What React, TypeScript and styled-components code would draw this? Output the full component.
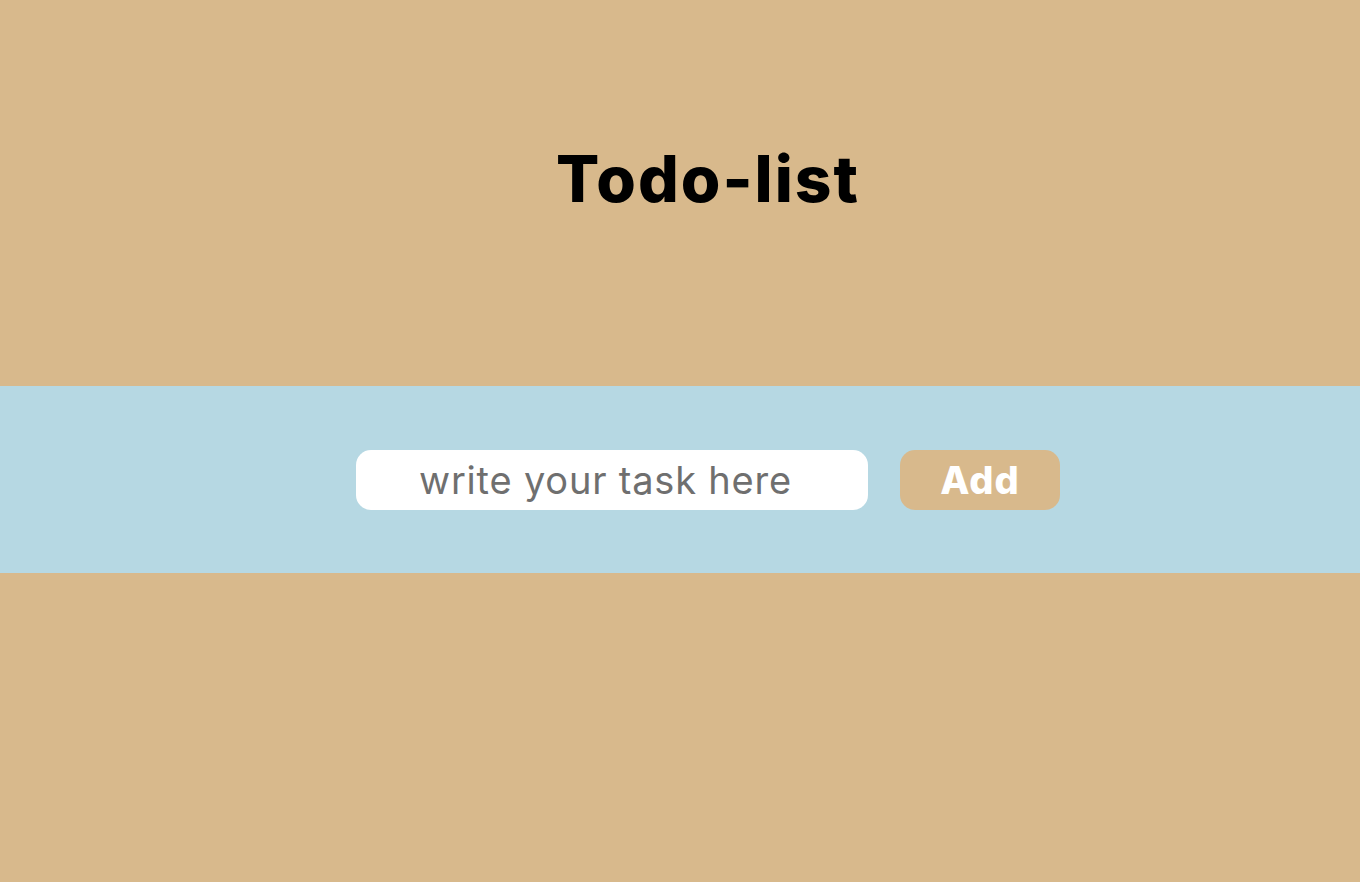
import styled, { createGlobalStyle } from 'styled-components';

const Global = createGlobalStyle`
	html, body {
		margin: 0;
		padding: 0;
		background: #d8b98c;
		font-family: Inter, "Noto Sans", sans-serif;
	}
`;

const Page = styled.div`
	display: flex;
	flex-direction: column;
	min-height: 882px;
	background: #d8b98c;
`;

const Header = styled.header`
	height: 386px;
	display: flex;
	justify-content: center;
	padding-left: 56px;
	box-sizing: border-box;
`;

const Title = styled.h1`
	margin: 139px 0 0;
	font-size: 64px;
	font-weight: 800;
	line-height: 80px;
	color: #000;
	letter-spacing: 2px;
`;

const Band = styled.section`
	height: 187px;
	background: #b6d8e3;
	display: flex;
	align-items: center;
	justify-content: center;
	gap: 32px;
	padding-left: 56px;
	box-sizing: border-box;
`;

const TaskInput = styled.input`
	width: 512px;
	height: 60px;
	box-sizing: border-box;
	border: none;
	border-radius: 15px;
	background: #fff;
	padding: 0 60px 0 63px;
	font-family: inherit;
	font-size: 38px;
	letter-spacing: 0.8px;
	color: #333;
	outline: none;

	&::placeholder {
		color: #6f6f6f;
	}
`;

const AddButton = styled.button`
	width: 160px;
	height: 60px;
	border: none;
	border-radius: 15px;
	background: #d8b98c;
	color: #fff;
	font-family: inherit;
	font-size: 38px;
	font-weight: 800;
	letter-spacing: 1px;
	cursor: pointer;
`;

export default function App() {
	return (
		<>
			<Global />
			<Page>
				<Header>
					<Title>Todo-list</Title>
				</Header>
				<Band>
					<TaskInput placeholder="write your task here" />
					<AddButton>Add</AddButton>
				</Band>
			</Page>
		</>
	);
}
